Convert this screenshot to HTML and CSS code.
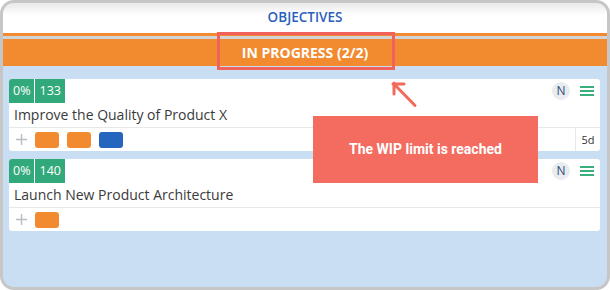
FILE: index.html
```html
<!DOCTYPE html>
<html>
<head>
<meta charset="utf-8">
<link rel="stylesheet" href="styles.css">
</head>
<body>
<div class="frame">
  <div class="header">OBJECTIVES</div>
  <div class="column">
    <div class="col-head"><div class="col-head-inner">IN PROGRESS (2/2)</div></div>
    <div class="cards">
      <div class="card">
        <div class="card-top">
          <div class="badges"><span class="badge">0%</span><span class="badge">133</span></div>
          <div class="card-tools">
            <span class="avatar">N</span>
            <span class="menu"><i></i><i></i><i></i></span>
          </div>
        </div>
        <div class="card-title">Improve the Quality of Product X</div>
        <div class="card-bottom">
          <div class="tags">
            <svg class="plus" width="11" height="11" viewBox="0 0 11 11"><path d="M5.5 0V11M0 5.5H11" stroke="#b9bcbf" stroke-width="1.4"/></svg>
            <span class="chip orange"></span>
            <span class="chip orange"></span>
            <span class="chip blue"></span>
          </div>
          <div class="age">5d</div>
        </div>
      </div>
      <div class="card">
        <div class="card-top">
          <div class="badges"><span class="badge">0%</span><span class="badge">140</span></div>
          <div class="card-tools">
            <span class="avatar">N</span>
            <span class="menu"><i></i><i></i><i></i></span>
          </div>
        </div>
        <div class="card-title">Launch New Product Architecture</div>
        <div class="card-bottom">
          <div class="tags">
            <svg class="plus" width="11" height="11" viewBox="0 0 11 11"><path d="M5.5 0V11M0 5.5H11" stroke="#b9bcbf" stroke-width="1.4"/></svg>
            <span class="chip orange"></span>
          </div>
        </div>
      </div>
    </div>
  </div>
  <div class="highlight"></div>
  <svg class="arrow" width="30" height="30" viewBox="0 0 30 30"><path d="M4 4L25 25.5M3 4H14M4 3V14" stroke="#f26b5a" stroke-width="3" fill="none" stroke-linecap="round"/></svg>
  <div class="tooltip">The WIP limit is reached</div>
</div>
</body>
</html>
```
FILE: styles.css
```css
html, body {
  margin: 0;
  padding: 0;
  background: #ffffff;
}
.frame {
  position: relative;
  width: 610px;
  height: 290px;
  box-sizing: border-box;
  border: 3px solid #c6c6c6;
  border-radius: 14px;
  overflow: hidden;
  background: #c9ddf3;
  font-family: "Open Sans", "Liberation Sans", sans-serif;
}
.header {
  height: 30px;
  line-height: 28px;
  text-align: center;
  background: linear-gradient(#e9e9e9 0px, #ffffff 12px);
  color: #2b5fbd;
  font-size: 13.5px;
  font-weight: 600;
}
.col-head {
  background: #f28b30;
  padding-top: 3px;
}
.col-head-inner {
  border-top: 3px solid #cfd4d8;
  height: 27px;
  line-height: 27px;
  text-align: center;
  color: #ffffff;
  font-size: 14px;
  font-weight: 700;
}
.cards {
  display: flex;
  flex-direction: column;
  gap: 8px;
  padding: 13px 7px 0 6px;
}
.card {
  background: #ffffff;
  border-radius: 3px;
  overflow: hidden;
}
.card-top {
  display: flex;
  justify-content: space-between;
  align-items: flex-start;
  height: 24px;
}
.badges {
  display: flex;
  gap: 1px;
}
.badge {
  background: #32a97b;
  color: #ffffff;
  font-size: 12.5px;
  height: 24px;
  line-height: 24px;
  padding: 0 4px;
}
.card-tools {
  display: flex;
  align-items: center;
  gap: 10px;
  padding: 3px 6px 0 0;
}
.avatar {
  width: 18px;
  height: 18px;
  border-radius: 50%;
  background: #e8ebef;
  color: #34507a;
  font-size: 12px;
  line-height: 18px;
  text-align: center;
}
.menu {
  display: flex;
  flex-direction: column;
  gap: 2px;
  width: 14px;
}
.menu i {
  display: block;
  height: 2px;
  background: #3aae7c;
}
.card-title {
  height: 24px;
  line-height: 24px;
  padding-left: 5px;
  font-size: 14px;
  color: #3a3a3a;
}
.card-bottom {
  display: flex;
  justify-content: space-between;
  height: 23px;
  border-top: 1px solid #e6e8ea;
}
.tags {
  display: flex;
  align-items: center;
  gap: 8px;
  padding-left: 7px;
}
.chip {
  width: 24px;
  height: 16px;
  border-radius: 3px;
}
.chip.orange { background: #f28b30; }
.chip.blue { background: #2565be; }
.age {
  width: 24px;
  border-left: 1px solid #e6e8ea;
  font-size: 11px;
  line-height: 23px;
  text-align: center;
  color: #333333;
}
.highlight {
  position: absolute;
  left: 214px;
  top: 29px;
  width: 178px;
  height: 38px;
  box-sizing: border-box;
  border: 3px solid #f0625a;
}
.arrow {
  position: absolute;
  left: 387px;
  top: 77px;
}
.tooltip {
  position: absolute;
  left: 310px;
  top: 113px;
  width: 225px;
  height: 67px;
  background: #f46b5f;
  color: #ffffff;
  font-family: Roboto, "Liberation Sans", sans-serif;
  font-weight: 700;
  font-size: 14px;
  line-height: 67px;
  text-align: center;
}
```
